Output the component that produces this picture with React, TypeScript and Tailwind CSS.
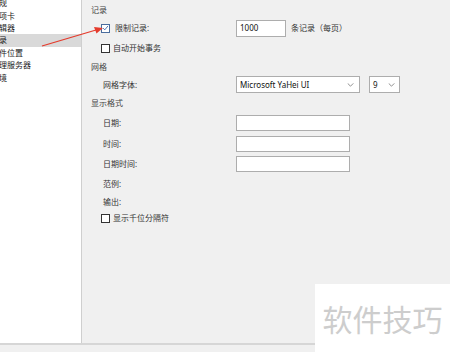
import React from 'react';

const navItems = ['常规', '选项卡', '编辑器', '记录', '文件位置', '代理服务器', '环境'];

const Checkbox = ({ checked = false }: { checked?: boolean }) => (
  <span
    className={`flex h-[9px] w-[9px] shrink-0 items-center justify-center border bg-white ${
      checked ? 'border-[#4a6d9e]' : 'border-[#333]'
    }`}
  >
    {checked && (
      <svg viewBox="0 0 10 10" className="h-[8px] w-[8px]">
        <path d="M1.5 5.2 L4 7.6 L8.6 2" fill="none" stroke="#2f5fa8" strokeWidth="1.2" />
      </svg>
    )}
  </span>
);

const Chevron = () => (
  <svg viewBox="0 0 8 5" className="h-[4px] w-[7px]">
    <path d="M0.5 0.5 L4 4 L7.5 0.5" fill="none" stroke="#666" strokeWidth="0.9" />
  </svg>
);

const Box = ({ className = '', children }: { className?: string; children?: React.ReactNode }) => (
  <div className={`flex items-center border border-[#adadad] bg-white px-[3px] text-[8px] text-[#111] ${className}`}>
    {children}
  </div>
);

const App = () => {
  return (
    <div
      className="relative h-[352px] w-[450px] overflow-hidden bg-[#f0f0f0] text-[8px] text-[#333]"
      style={{ fontFamily: '"Noto Sans", "Noto Sans CJK SC", sans-serif' }}
    >
      <div className="flex h-[343px]">
        {/* tree */}
        <div className="h-full w-[82px] shrink-0 overflow-hidden border-r border-[#cfcfcf] bg-white">
          <div className="mt-[-3px] flex flex-col">
            {navItems.map((t) => (
              <div
                key={t}
                className={`flex h-[12.4px] items-center whitespace-nowrap text-[#1a1a1a] ${
                  t === '记录' ? 'bg-[#d9d9d9]' : ''
                }`}
              >
                <span className="ml-[-9px] leading-none">{t}</span>
              </div>
            ))}
          </div>
        </div>

        {/* settings */}
        <div className="flex flex-1 flex-col pt-[2px]">
          <div className="flex h-[16px] items-center pl-[9px] text-[#444]">记录</div>

          <div className="flex h-[20px] items-center pl-[19px]">
            <div className="flex w-[135px] items-center gap-[5px]">
              <Checkbox checked />
              <span>限制记录:</span>
            </div>
            <Box className="h-[17px] w-[50px]">1000</Box>
            <span className="ml-[5px]">条记录（每页）</span>
          </div>

          <div className="flex h-[20px] items-center gap-[3px] pl-[19px]">
            <Checkbox />
            <span>自动开始事务</span>
          </div>

          <div className="flex h-[17px] items-center pl-[9px] text-[#444]">网格</div>

          <div className="flex h-[19px] items-center pl-[21px]">
            <span className="w-[133px]">网格字体:</span>
            <Box className="h-[17px] w-[124px] justify-between pr-[5px]">
              <span>Microsoft YaHei UI</span>
              <Chevron />
            </Box>
            <Box className="ml-[9px] h-[17px] w-[31px] justify-between pr-[4px]">
              <span>9</span>
              <Chevron />
            </Box>
          </div>

          <div className="flex h-[18px] items-center pl-[9px] text-[#444]">显示格式</div>

          <div className="flex h-[21px] items-center pl-[21px]">
            <span className="w-[133px]">日期:</span>
            <Box className="h-[16px] w-[114px]" />
          </div>
          <div className="flex h-[21px] items-center pl-[21px]">
            <span className="w-[133px]">时间:</span>
            <Box className="h-[16px] w-[114px]" />
          </div>
          <div className="flex h-[20px] items-center pl-[21px]">
            <span className="w-[133px]">日期时间:</span>
            <Box className="h-[16px] w-[114px]" />
          </div>

          <div className="flex h-[19px] items-center pl-[21px]">范例:</div>
          <div className="flex h-[18px] items-center pl-[21px]">输出:</div>

          <div className="flex h-[14px] items-center gap-[3px] pl-[19px]">
            <Checkbox />
            <span>显示千位分隔符</span>
          </div>
        </div>
      </div>

      <div className="h-[9px] border-t-2 border-[#d6d6d6] bg-[#f0f0f0]" />

      {/* red annotation arrow */}
      <svg className="absolute left-0 top-0" width="120" height="60" viewBox="0 0 120 60">
        <line x1="42" y1="46" x2="96" y2="30" stroke="#e53b2c" strokeWidth="1.3" />
        <path d="M103 28 L94 27 L96.5 33.5 Z" fill="#e53b2c" />
      </svg>

      {/* watermark */}
      <div className="absolute bottom-0 right-0 flex h-[68px] w-[135px] items-center justify-center bg-white">
        <span className="text-[30px] leading-none text-[#cdcdcd]" style={{ fontFamily: '"Noto Sans CJK SC", sans-serif' }}>
          软件技巧
        </span>
      </div>
    </div>
  );
};

export default App;
